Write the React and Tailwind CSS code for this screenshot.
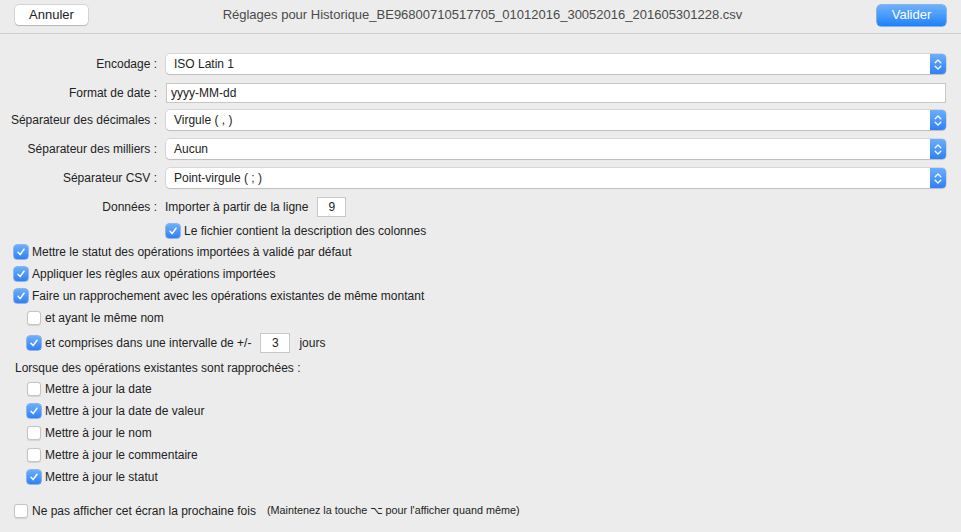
import React from 'react';

const Check = ({ checked }) =>
  checked ? (
    <span className="w-[14px] h-[14px] shrink-0 rounded-[3px] bg-gradient-to-b from-[#6aaefc] to-[#2f80f6] flex items-center justify-center shadow-[0_0_0_0.5px_#3a7be0]">
      <svg width="10" height="10" viewBox="0 0 10 10">
        <path d="M2 5.3 L4.1 7.6 L8 2.2" fill="none" stroke="white" strokeWidth="1.5" strokeLinecap="round" strokeLinejoin="round" />
      </svg>
    </span>
  ) : (
    <span className="w-[14px] h-[14px] shrink-0 rounded-[3px] bg-white border border-[#c4c4c4] shadow-[0_0.5px_1px_rgba(0,0,0,0.1)]" />
  );

const Stepper = () => (
  <span className="w-[16px] h-full rounded-r-[4px] bg-gradient-to-b from-[#6aaefc] to-[#2f80f6] flex items-center justify-center">
    <svg width="8" height="13" viewBox="0 0 8 13">
      <path d="M1.2 4.8 L4 2 L6.8 4.8 M1.2 8.2 L4 11 L6.8 8.2" fill="none" stroke="white" strokeWidth="1.3" strokeLinecap="round" strokeLinejoin="round" />
    </svg>
  </span>
);

const Label = ({ children }) => (
  <div className="w-[157px] shrink-0 text-right whitespace-nowrap">{children}</div>
);

const Select = ({ value }) => (
  <div className="flex-1 h-[20px] flex items-stretch bg-white rounded-[4px] shadow-[0_0_0_0.5px_rgba(0,0,0,0.18),0_1px_1px_rgba(0,0,0,0.12)]">
    <div className="flex-1 pl-[8px] flex items-center">{value}</div>
    <Stepper />
  </div>
);

const SelectRow = ({ label, value, mt }) => (
  <div className={`flex items-center h-[22px] gap-[9px] ${mt}`}>
    <Label>{label}</Label>
    <Select value={value} />
  </div>
);

const CheckRow = ({ checked, text, indent }) => (
  <div className={`flex items-center h-[22px] gap-[4px] ${indent ? 'pl-[27px]' : 'pl-[14px]'}`}>
    <Check checked={checked} />
    <span>{text}</span>
  </div>
);

export default function App() {
  return (
    <div className="w-[961px] h-[532px] bg-[#ececec] text-[12px] text-[#222] font-['Liberation_Sans',Arial,sans-serif] overflow-hidden">
      <div className="h-[34px] border-b border-[#cfcfcf] flex items-center justify-between px-[15px] pb-[3px]">
        <button className="w-[73px] h-[20px] bg-white rounded-[4px] text-[13px] text-[#222] shadow-[0_0_0_0.5px_rgba(0,0,0,0.2),0_1px_1px_rgba(0,0,0,0.15)]">
          Annuler
        </button>
        <div className="text-[13px] text-[#4a4a4a]">
          Réglages pour Historique_BE96800710517705_01012016_30052016_201605301228.csv
        </div>
        <button className="w-[69px] h-[21px] rounded-[4px] text-[13px] text-white bg-gradient-to-b from-[#6cb2fb] to-[#1c80fa] shadow-[0_0_0_0.5px_#2a74d8]">
          Valider
        </button>
      </div>

      <div className="pr-[15px]">
        <SelectRow label="Encodage :" value="ISO Latin 1" mt="mt-[19px]" />
        <div className="flex items-center h-[22px] gap-[9px] mt-[7px]">
          <Label>Format de date :</Label>
          <div className="flex-1 h-[20px] bg-white border border-[#c8c8c8] pl-[4px] flex items-center">yyyy-MM-dd</div>
        </div>
        <SelectRow label="Séparateur des décimales :" value="Virgule ( , )" mt="mt-[5px]" />
        <SelectRow label="Séparateur des milliers :" value="Aucun" mt="mt-[7px]" />
        <SelectRow label="Séparateur CSV :" value="Point-virgule ( ; )" mt="mt-[7px]" />
        <div className="flex items-center h-[22px] mt-[7px]">
          <Label>Données :</Label>
          <span className="ml-[8px]">Importer à partir de la ligne</span>
          <div className="ml-[9px] w-[29px] h-[20px] bg-white border border-[#c8c8c8] flex items-center justify-center">9</div>
        </div>
        <div className="flex items-center h-[21px] mt-[2px] pl-[166px] gap-[4px]">
          <Check checked />
          <span>Le fichier contient la description des colonnes</span>
        </div>
      </div>

      <CheckRow checked text="Mettre le statut des opérations importées à validé par défaut" />
      <CheckRow checked text="Appliquer les règles aux opérations importées" />
      <CheckRow checked text="Faire un rapprochement avec les opérations existantes de même montant" />
      <CheckRow indent text="et ayant le même nom" />
      <div className="flex items-center h-[22px] mt-[3px] pl-[27px] gap-[4px]">
        <Check checked />
        <span>et comprises dans une intervalle de +/-</span>
        <div className="ml-[5px] w-[30px] h-[20px] bg-white border border-[#c8c8c8] flex items-center justify-center">3</div>
        <span className="ml-[5px]">jours</span>
      </div>
      <div className="flex items-center h-[21px] mt-[3px] pl-[15px]">Lorsque des opérations existantes sont rapprochées :</div>
      <CheckRow indent text="Mettre à jour la date" />
      <CheckRow indent checked text="Mettre à jour la date de valeur" />
      <CheckRow indent text="Mettre à jour le nom" />
      <CheckRow indent text="Mettre à jour le commentaire" />
      <CheckRow indent checked text="Mettre à jour le statut" />
      <div className="flex items-center h-[22px] mt-[12px] pl-[14px] gap-[4px]">
        <Check />
        <span>Ne pas afficher cet écran la prochaine fois</span>
        <span className="ml-[7px] text-[10.8px]">
          (Maintenez la touche <span className="font-['DejaVu_Sans',sans-serif]">⌥</span> pour l'afficher quand même)
        </span>
      </div>
    </div>
  );
}
